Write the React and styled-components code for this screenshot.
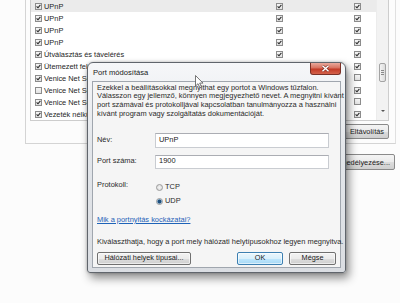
import React from "react";
import styled, { createGlobalStyle } from "styled-components";

const GlobalStyle = createGlobalStyle`
  html, body {
    margin: 0;
    padding: 0;
    background: #fcfcfc;
  }
  body {
    font-family: "Liberation Sans", Arial, sans-serif;
  }
`;

const Screen = styled.div`
  position: relative;
  width: 400px;
  height: 303px;
  overflow: hidden;
  background: #fcfcfc;
  font-family: "Liberation Sans", Arial, sans-serif;
  color: #1f1f1f;
`;

// background: rule list behind the dialog
const Group = styled.div`
  box-sizing: border-box;
  margin-left: 25px;
  width: 371px;
  height: 144px;
  padding: 0 6px 0 4px;
  border-left: 1px solid #d4d4d4;
  border-right: 1px solid #e0e0e0;
  border-bottom: 1px solid #d4d4d4;
  display: flex;
  flex-direction: column;
`;

const ListBox = styled.div`
  box-sizing: border-box;
  height: 121px;
  display: flex;
  border: 1px solid #cdcdcd;
  border-top: none;
  background: #fff;
`;

const Rows = styled.div`
  flex: 1;
  display: flex;
  flex-direction: column;
`;

const Row = styled.div`
  height: 12.1px;
  display: grid;
  grid-template-columns: 241px 78px 1fr;
  align-items: center;
  padding-left: 4px;
  background: ${(p) => (p.$selected ? "#ebebeb" : "transparent")};
  font-size: 7.4px;
  white-space: nowrap;
`;

const NameCell = styled.div`
  display: flex;
  align-items: center;
  gap: 2px;
  color: #1e1e1e;
`;

const Box = styled.span`
  box-sizing: border-box;
  width: 7px;
  height: 7px;
  border: 1px solid #8c8c8c;
  background: linear-gradient(#f6f6f6, #e2e2e2);
  display: inline-flex;
  align-items: center;
  justify-content: center;
  flex: none;
`;

const Scrollbar = styled.div`
  width: 11px;
  background: #f2f2f2;
  border-left: 1px solid #ececec;
  display: flex;
  flex-direction: column;
  align-items: center;
`;

const Thumb = styled.div`
  box-sizing: border-box;
  margin-top: 63px;
  width: 7px;
  height: 19px;
  border: 1px solid #a3a3a3;
  border-radius: 2px;
  background: linear-gradient(90deg, #f4f4f4, #dcdcdc);
  display: flex;
  flex-direction: column;
  align-items: center;
  justify-content: center;
  gap: 1px;
  span {
    width: 3px;
    height: 1px;
    background: #8a8a8a;
  }
`;

const Arrow = styled.div`
  margin-top: 28px;
  width: 0;
  height: 0;
  border-left: 2px solid transparent;
  border-right: 2px solid transparent;
  border-top: 2px solid #555;
`;

const GroupFooter = styled.div`
  display: flex;
  justify-content: flex-end;
  margin-top: 3px;
`;

const BackButton = styled.div`
  box-sizing: border-box;
  height: ${(p) => p.$h || 15}px;
  width: ${(p) => p.$w}px;
  border: 1px solid #8a8a8a;
  border-radius: 2px;
  background: linear-gradient(#f4f4f4 0%, #ebebeb 50%, #dcdcdc 51%, #cfcfcf 100%);
  font-size: 7.4px;
  color: #222;
  display: flex;
  align-items: center;
  justify-content: flex-end;
  padding-right: 4px;
  white-space: nowrap;
`;

const OuterFooter = styled.div`
  display: flex;
  justify-content: flex-end;
  padding-right: 5px;
  margin-top: 10px;
`;

// dialog window
const Window = styled.div`
  position: absolute;
  left: 87px;
  top: 62px;
  width: 259px;
  height: 211px;
  box-sizing: border-box;
  border: 1px solid #60656c;
  border-radius: 6px 6px 3px 3px;
  background: linear-gradient(#f6f7f9, #e3e6ea 40%, #dadde2);
  box-shadow: 3px 5px 10px rgba(0, 0, 0, 0.45), 0 0 3px rgba(0, 0, 0, 0.25);
  padding: 0 4px 4px 4px;
  display: flex;
  flex-direction: column;
`;

const TitleBar = styled.div`
  height: 20px;
  display: flex;
  justify-content: space-between;
  align-items: flex-start;
`;

const Title = styled.div`
  margin-top: 5px;
  padding-left: 1px;
  font-size: 7.6px;
  color: #1a1a1a;
`;

const CloseButton = styled.div`
  box-sizing: border-box;
  width: 31px;
  height: 12px;
  border: 1px solid #7a3026;
  border-top: none;
  border-radius: 0 0 3px 3px;
  background: linear-gradient(#e9a99c 0%, #d7715f 45%, #c23a26 55%, #d4624b 100%);
  display: flex;
  align-items: center;
  justify-content: center;
`;

const Client = styled.div`
  flex: 1;
  box-sizing: border-box;
  border: 1px solid #a0a6ae;
  background: #f5f5f5;
  padding: 2px 4px 2px 4px;
  display: flex;
  flex-direction: column;
  font-size: 7.45px;
  color: #2a2a2a;
  line-height: 8.7px;
`;

const Intro = styled.p`
  margin: 0;
  white-space: nowrap;
`;

const Form = styled.div`
  margin-top: 14px;
  display: grid;
  grid-template-columns: 58px 174px;
  row-gap: 7px;
  align-items: center;
`;

const Field = styled.div`
  box-sizing: border-box;
  height: ${(p) => p.$h}px;
  border: 1px solid #c9ccd1;
  border-top-color: #abadb3;
  background: #fff;
  padding-left: 3px;
  display: flex;
  align-items: center;
  color: #222;
`;

const ProtocolRow = styled.div`
  margin-top: 11px;
  display: grid;
  grid-template-columns: 58px 1fr;
  align-items: start;
`;

const Label = styled.div`
  padding-top: ${(p) => p.$top || 0}px;
`;

const Radios = styled.div`
  display: flex;
  flex-direction: column;
  gap: 2px;
  padding-top: 2px;
`;

const RadioItem = styled.div`
  height: 12px;
  display: flex;
  align-items: center;
  gap: 2px;
  padding-left: 1px;
`;

const Radio = styled.span`
  box-sizing: border-box;
  width: 7px;
  height: 7px;
  border-radius: 50%;
  border: 1px solid #9a9a9a;
  background: ${(p) =>
    p.$on
      ? "radial-gradient(circle, #1e4f7c 0 1.6px, #8fb6d6 2.2px, #e8eef3 3px)"
      : "radial-gradient(circle, #f4f4f4, #d8d8d8)"};
`;

const Link = styled.a`
  margin-top: 8px;
  color: #1e63b8;
  text-decoration: underline;
  align-self: flex-start;
`;

const Note = styled.p`
  margin: 14px 0 0 0;
  white-space: nowrap;
`;

const ButtonRow = styled.div`
  margin-top: 5px;
  display: flex;
  justify-content: space-between;
`;

const RightButtons = styled.div`
  display: flex;
  gap: 6px;
`;

const Button = styled.div`
  box-sizing: border-box;
  width: ${(p) => p.$w}px;
  height: 13px;
  border: 1px solid ${(p) => (p.$default ? "#3c7fb1" : "#707070")};
  border-radius: 2px;
  background: ${(p) =>
    p.$default
      ? "linear-gradient(#eaf6fd 0%, #d9f0fc 50%, #bee6fd 51%, #a7d9f5 100%)"
      : "linear-gradient(#f2f2f2 0%, #ebebeb 50%, #dddddd 51%, #cfcfcf 100%)"};
  box-shadow: inset 0 0 0 1px rgba(255, 255, 255, 0.6);
  display: flex;
  align-items: center;
  justify-content: center;
  font-size: 7.3px;
  color: #1a1a1a;
`;

const Cursor = styled.svg`
  position: absolute;
  left: 195px;
  top: 75px;
`;

const Check = () => (
  <svg width="5" height="5" viewBox="0 0 5 5">
    <path d="M0.6 2.4 L2 3.8 L4.4 0.9" fill="none" stroke="#2a2a2a" strokeWidth="1.1" />
  </svg>
);

const CheckBox = ({ on }) => <Box>{on ? <Check /> : null}</Box>;

const rules = [
  { name: "UPnP", a: 1, b: 1, c: 1, selected: true },
  { name: "UPnP", a: 1, b: 1, c: 1 },
  { name: "UPnP", a: 1, b: 1, c: 1 },
  { name: "UPnP", a: 1, b: 1, c: 1 },
  { name: "Útválasztás és távelérés", a: 1, b: 1, c: 1 },
  { name: "Ütemezett feladatok távfelügyelete", a: 1, b: 1, c: 1 },
  { name: "Venice Net Services", a: 1, b: 1, c: 0 },
  { name: "Venice Net Services", a: 0, b: 1, c: 1 },
  { name: "Venice Net Services", a: 1, b: 1, c: 0 },
  { name: "Vezeték nélküli hordozható eszközök", a: 1, b: 1, c: 1 },
];

export default function App() {
  return (
    <Screen>
      <GlobalStyle />
      <Group>
        <ListBox>
          <Rows>
            {rules.map((r, i) => (
              <Row key={i} $selected={r.selected}>
                <NameCell>
                  <CheckBox on={r.a} />
                  {r.name}
                </NameCell>
                <div>
                  <CheckBox on={r.b} />
                </div>
                <div>
                  <CheckBox on={r.c} />
                </div>
              </Row>
            ))}
          </Rows>
          <Scrollbar>
            <Thumb>
              <span />
              <span />
              <span />
            </Thumb>
            <Arrow />
          </Scrollbar>
        </ListBox>
        <GroupFooter>
          <BackButton $w={46}>Eltávolítás</BackButton>
        </GroupFooter>
      </Group>
      <OuterFooter>
        <BackButton $w={110} $h={16}>
          Kivételek engedélyezése...
        </BackButton>
      </OuterFooter>

      <Window>
        <TitleBar>
          <Title>Port módosítása</Title>
          <CloseButton>
            <svg width="9" height="7" viewBox="0 0 9 7">
              <path d="M1.5 0.8 L7.5 6.2 M7.5 0.8 L1.5 6.2" stroke="#7a2a20" strokeWidth="2.6" />
              <path d="M1.5 0.8 L7.5 6.2 M7.5 0.8 L1.5 6.2" stroke="#fff" strokeWidth="1.5" />
            </svg>
          </CloseButton>
        </TitleBar>
        <Client>
          <Intro>
            Ezekkel a beállításokkal megnyithat egy portot a Windows tűzfalon.
            <br />
            Válasszon egy jellemző, könnyen megjegyezhető nevet. A megnyitni kívánt
            <br />
            port számával és protokolljával kapcsolatban tanulmányozza a használni
            <br />
            kívánt program vagy szolgáltatás dokumentációját.
          </Intro>
          <Form>
            <Label>Név:</Label>
            <Field $h={15}>UPnP</Field>
            <Label>Port száma:</Label>
            <Field $h={14}>1900</Field>
          </Form>
          <ProtocolRow>
            <Label $top={1}>Protokoll:</Label>
            <Radios>
              <RadioItem>
                <Radio />
                TCP
              </RadioItem>
              <RadioItem>
                <Radio $on />
                UDP
              </RadioItem>
            </Radios>
          </ProtocolRow>
          <Link>Mik a portnyitás kockázatai?</Link>
          <Note>
            Kiválaszthatja, hogy a port mely hálózati helytípusokhoz legyen megnyitva.
          </Note>
          <ButtonRow>
            <Button $w={94}>Hálózati helyek típusai...</Button>
            <RightButtons>
              <Button $w={46} $default>
                OK
              </Button>
              <Button $w={47}>Mégse</Button>
            </RightButtons>
          </ButtonRow>
        </Client>
      </Window>

      <Cursor width="10" height="14" viewBox="0 0 10 14">
        <path
          d="M0.5 0.5 L0.5 11 L3 8.7 L4.9 12.8 L6.5 12.1 L4.7 8.1 L8 8.1 Z"
          fill="#fff"
          stroke="#555"
          strokeWidth="0.8"
          strokeLinejoin="round"
        />
      </Cursor>
    </Screen>
  );
}
